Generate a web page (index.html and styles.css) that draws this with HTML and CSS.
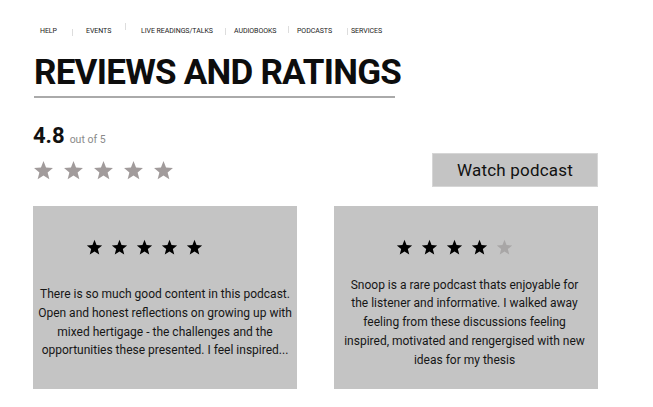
FILE: index.html
```html
<!DOCTYPE html>
<html lang="en">
<head>
<meta charset="utf-8">
<title>Reviews and Ratings</title>
<link rel="stylesheet" href="styles.css">
</head>
<body>
<svg width="0" height="0" class="defs" aria-hidden="true">
  <defs>
    <symbol id="star" viewBox="0 0 24 24">
      <polygon points="12,1.2 14.9,8.6 22.8,9.1 16.7,14.2 18.7,21.9 12,17.6 5.3,21.9 7.3,14.2 1.2,9.1 9.1,8.6"/>
    </symbol>
  </defs>
</svg>
<nav class="nav">
  <a class="nav-item w1">HELP<i class="sep s1"></i></a>
  <a class="nav-item w2">EVENTS<i class="sep s2"></i></a>
  <a class="nav-item w3">LIVE READINGS/TALKS<i class="sep s3"></i></a>
  <a class="nav-item w4">AUDIOBOOKS<i class="sep s4"></i></a>
  <a class="nav-item w5">PODCASTS<i class="sep s5"></i></a>
  <a class="nav-item">SERVICES</a>
</nav>
<main class="page">
  <h1 class="title">REVIEWS AND RATINGS</h1>
  <div class="rule"></div>
  <div class="score"><span class="score-num">4.8</span><span class="score-of">out of 5</span></div>
  <div class="rating-row">
    <div class="stars-big">
      <svg><use href="#star"/></svg><svg><use href="#star"/></svg><svg><use href="#star"/></svg><svg><use href="#star"/></svg><svg><use href="#star"/></svg>
    </div>
    <button class="watch">Watch podcast</button>
  </div>
  <div class="cards">
    <div class="card">
      <div class="card-stars left">
        <svg><use href="#star"/></svg><svg><use href="#star"/></svg><svg><use href="#star"/></svg><svg><use href="#star"/></svg><svg><use href="#star"/></svg>
      </div>
      <div class="card-body wide">
        <p>There is so much good content in this podcast. Open and honest reflections on growing up with mixed hertigage - the challenges and the opportunities these presented. I feel inspired...</p>
      </div>
    </div>
    <div class="card">
      <div class="card-stars right">
        <svg><use href="#star"/></svg><svg><use href="#star"/></svg><svg><use href="#star"/></svg><svg><use href="#star"/></svg><svg class="off"><use href="#star"/></svg>
      </div>
      <div class="card-body narrow">
        <p>Snoop is a rare podcast thats enjoyable for the listener and informative. I walked away feeling from these discussions feeling inspired, motivated and rengergised with new ideas for my thesis</p>
      </div>
    </div>
  </div>
</main>
</body>
</html>
```

FILE: styles.css
```css
* { box-sizing: border-box; }
html, body { margin: 0; padding: 0; background: #fff; }
body { font-family: Roboto, "Liberation Sans", sans-serif; color: #111; width: 653px; height: 407px; overflow: hidden; }
.defs { position: absolute; }

.nav { display: flex; align-items: center; height: 14px; margin: 24px 0 0 40px; }
.nav-item { display: flex; align-items: center; font-size: 7px; color: #1a1a1a; letter-spacing: -0.05px; white-space: nowrap; }
.w1 { width: 46px; }
.w2 { width: 55px; }
.w3 { width: 93px; }
.w4 { width: 63px; }
.w5 { width: 54px; }
.sep { display: block; width: 1px; height: 7px; background: #ddd; }
.s1 { margin-left: 15px; margin-top: 2px; }
.s2 { margin-left: 14px; margin-top: -10px; }
.s3 { margin-left: 12px; }
.s4 { margin-left: 12px; margin-top: -4px; }
.s5 { margin-left: 15px; }

.page { width: 598px; padding-left: 33px; }
.title { margin: 17px 0 0 1px; font-size: 35px; line-height: 36px; font-weight: 700; letter-spacing: -0.75px; color: #0d0d0d; }
.rule { width: 361px; height: 2px; background: #aaa; margin: 5px 0 0 1px; }

.score { margin-top: 24px; height: 28px; line-height: 28px; display: flex; align-items: baseline; }
.score-num { font-size: 22px; font-weight: 700; color: #111; }
.score-of { font-size: 10.5px; color: #8a8a8a; margin-left: 5px; }

.rating-row { display: flex; justify-content: space-between; align-items: center; margin-top: 3px; }
.stars-big { display: flex; gap: 9px; }
.stars-big svg { width: 21px; height: 21px; fill: #a19b9b; }
.watch { width: 166px; height: 34px; background: #c4c4c4; border: 1px solid #d6d6d6; font-family: Roboto, "Liberation Sans", sans-serif; font-size: 17px; color: #111; padding: 0; letter-spacing: 0.2px; }

.cards { display: flex; gap: 37px; margin-top: 19px; }
.card { width: 264px; height: 183px; background: #c4c4c4; display: flex; flex-direction: column; }
.card-stars { display: flex; gap: 8px; padding-top: 33px; }
.card-stars svg { width: 17px; height: 17px; fill: #000; }
.card-stars svg.off { fill: #a8a6a6; }
.card-stars.left { padding-left: 53px; }
.card-stars.right { padding-left: 62px; }
.card-body { flex: 1; display: flex; align-items: center; justify-content: center; }
.card-body.wide { padding: 0 2px 0 2px; }
.card-body.narrow { padding: 0 10px 0 7px; }
.card-body p { margin: 0; text-align: center; font-size: 12px; line-height: 18.8px; color: #161616; }
```
